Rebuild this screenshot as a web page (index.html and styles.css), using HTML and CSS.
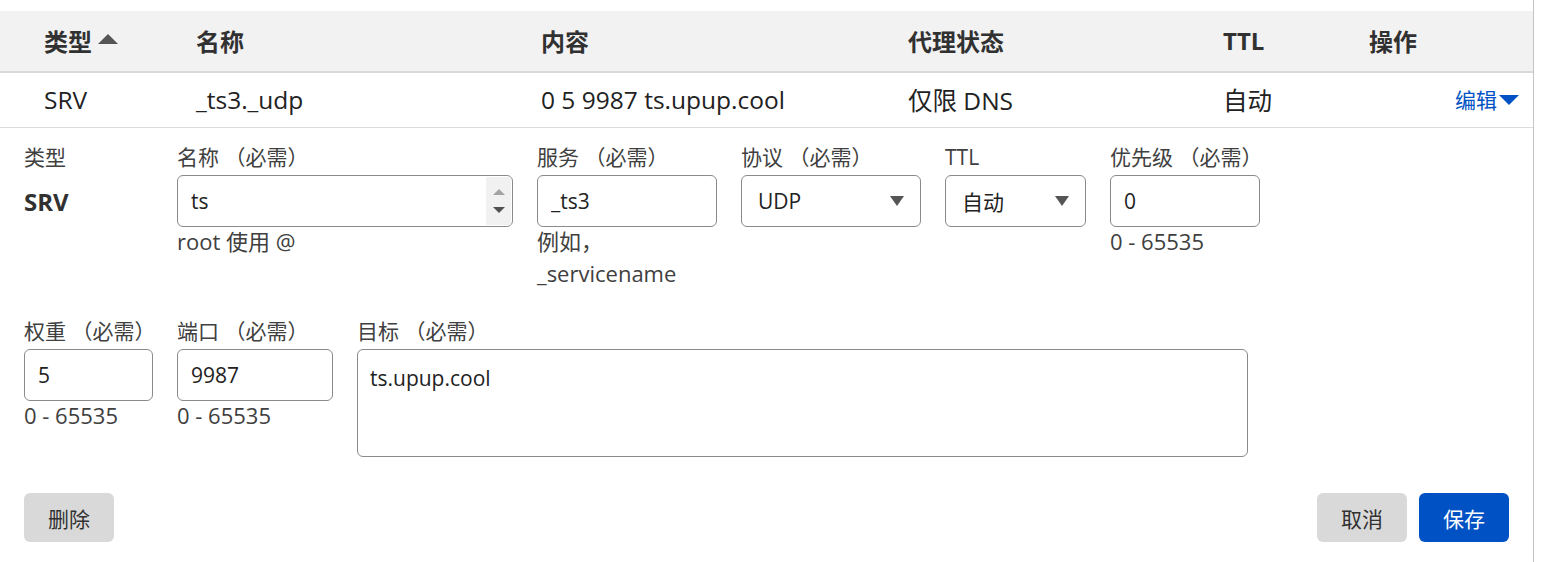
FILE: index.html
```html
<!DOCTYPE html>
<html lang="zh-CN">
<head>
<meta charset="utf-8">
<title>DNS 记录</title>
<link rel="stylesheet" href="styles.css">
</head>
<body>
<div class="panel">
  <div class="table-head cols">
    <div class="th">类型 <span class="sort-up"></span></div>
    <div class="th">名称</div>
    <div class="th">内容</div>
    <div class="th">代理状态</div>
    <div class="th">TTL</div>
    <div class="th">操作</div>
  </div>
  <div class="table-row cols">
    <div class="td">SRV</div>
    <div class="td">_ts3._udp</div>
    <div class="td">0 5 9987 ts.upup.cool</div>
    <div class="td">仅限 DNS</div>
    <div class="td">自动</div>
    <div class="td td-action"><a class="edit-link" href="#">编辑<span class="caret-down"></span></a></div>
  </div>

  <form class="editor">
    <div class="form-row">
      <div class="field w-type">
        <label class="label">类型</label>
        <div class="static-value">SRV</div>
      </div>
      <div class="field w-name">
        <label class="label">名称 （必需）</label>
        <div class="box combo">
          <input class="bare" type="text" value="ts">
          <div class="spinner"><span class="spin-up"></span><span class="spin-down"></span></div>
        </div>
        <div class="help">root 使用 @</div>
      </div>
      <div class="field w-180">
        <label class="label">服务 （必需）</label>
        <input class="box input" type="text" value="_ts3">
        <div class="help">例如，_servicename</div>
      </div>
      <div class="field w-180">
        <label class="label">协议 （必需）</label>
        <div class="box select"><span>UDP</span><span class="select-caret"></span></div>
      </div>
      <div class="field w-ttl">
        <label class="label">TTL</label>
        <div class="box select"><span>自动</span><span class="select-caret"></span></div>
      </div>
      <div class="field w-prio">
        <label class="label">优先级 （必需）</label>
        <input class="box input" type="text" value="0">
        <div class="help">0 - 65535</div>
      </div>
    </div>

    <div class="form-row row-2">
      <div class="field w-type">
        <label class="label">权重 （必需）</label>
        <input class="box input" type="text" value="5">
        <div class="help">0 - 65535</div>
      </div>
      <div class="field w-port">
        <label class="label">端口 （必需）</label>
        <input class="box input" type="text" value="9987">
        <div class="help">0 - 65535</div>
      </div>
      <div class="field w-target">
        <label class="label">目标 （必需）</label>
        <textarea class="box textarea">ts.upup.cool</textarea>
      </div>
    </div>

    <div class="actions">
      <button type="button" class="btn btn-grey">删除</button>
      <div class="actions-right">
        <button type="button" class="btn btn-grey">取消</button>
        <button type="button" class="btn btn-primary">保存</button>
      </div>
    </div>
  </form>
</div>
</body>
</html>
```

FILE: styles.css
```css
* { box-sizing: border-box; }

html, body {
  margin: 0;
  padding: 0;
  background: #ffffff;
}

body {
  font-family: "Open Sans", "Noto Sans CJK SC", "Noto Sans", sans-serif;
  color: #222222;
  overflow: hidden;
}

.panel {
  width: 1534px;
  height: 562px;
  padding-top: 11px;
  border-right: 1px solid #c4c4c4;
}

/* ---------- table ---------- */
.cols {
  display: grid;
  grid-template-columns: 152px 345px 367px 315px 146px 1fr;
  align-items: center;
  padding-left: 44px;
  padding-right: 14px;
}

.table-head {
  height: 62px;
  padding-bottom: 2px;
  background: #f2f2f2;
  border-bottom: 2px solid #d9d9d9;
}

.th {
  font-size: 24px;
  font-weight: 700;
  color: #313131;
  display: flex;
  align-items: center;
  gap: 6px;
}

.sort-up {
  width: 0;
  height: 0;
  border-left: 10px solid transparent;
  border-right: 10px solid transparent;
  border-bottom: 10px solid #555555;
  margin-top: -2px;
}

.table-row {
  height: 55px;
  padding-bottom: 2px;
  border-bottom: 1px solid #dcdcdc;
}

.td {
  font-size: 24.5px;
  color: #222222;
  white-space: nowrap;
}

.td-action {
  display: flex;
  justify-content: flex-end;
}

.edit-link {
  color: #0051c3;
  font-size: 21px;
  text-decoration: none;
  display: flex;
  align-items: center;
  gap: 2px;
}

.caret-down {
  width: 0;
  height: 0;
  border-left: 10px solid transparent;
  border-right: 10px solid transparent;
  border-top: 10px solid #0051c3;
  margin-top: 2px;
}

/* ---------- editor ---------- */
.editor {
  padding: 15px 24px 0 24px;
  margin: 0;
}

.form-row {
  display: flex;
  gap: 24px;
  align-items: flex-start;
}

.row-2 {
  margin-top: 28px;
}

.field {
  display: flex;
  flex-direction: column;
}

.w-type { width: 129px; }
.w-name { width: 336px; }
.w-180 { width: 180px; }
.w-ttl { width: 141px; }
.w-prio { width: 150px; }
.w-port { width: 156px; }
.w-target { width: 891px; }

.label {
  font-size: 21px;
  line-height: 28px;
  color: #404040;
  margin-bottom: 4px;
  white-space: nowrap;
}

.static-value {
  height: 52px;
  display: flex;
  align-items: center;
  font-size: 24px;
  font-weight: 700;
  color: #313131;
}

.box {
  height: 52px;
  border: 1px solid #8a8a8a;
  border-radius: 6px;
  background: #ffffff;
  font-family: inherit;
  font-size: 21px;
  color: #222222;
}

.input {
  width: 100%;
  padding: 0 13px;
  outline: none;
}

.combo {
  display: flex;
  overflow: hidden;
}

.bare {
  flex: 1;
  min-width: 0;
  border: 0;
  outline: none;
  background: transparent;
  font-family: inherit;
  font-size: 21px;
  color: #222222;
  padding: 0 13px;
}

.spinner {
  width: 25px;
  margin: 1px 1px 1px 0;
  background: #f1f1f1;
  display: flex;
  flex-direction: column;
  align-items: center;
  justify-content: center;
  gap: 12px;
}

.spin-up {
  width: 0;
  height: 0;
  border-left: 6px solid transparent;
  border-right: 6px solid transparent;
  border-bottom: 6px solid #a3a3a3;
}

.spin-down {
  width: 0;
  height: 0;
  border-left: 6px solid transparent;
  border-right: 6px solid transparent;
  border-top: 6px solid #505050;
}

.select {
  display: flex;
  align-items: center;
  justify-content: space-between;
  padding: 0 16px 0 16px;
}

.select-caret {
  width: 0;
  height: 0;
  border-left: 7px solid transparent;
  border-right: 7px solid transparent;
  border-top: 10px solid #555555;
}

.textarea {
  width: 100%;
  height: 108px;
  padding: 13px 12px;
  line-height: 30px;
  resize: none;
  outline: none;
}

.help {
  font-size: 22px;
  line-height: 32px;
  margin-top: -2px;
  color: #404040;
}

/* ---------- actions ---------- */
.actions {
  display: flex;
  justify-content: space-between;
  margin-top: 36px;
}

.actions-right {
  display: flex;
  gap: 12px;
}

.btn {
  width: 90px;
  height: 49px;
  border: 0;
  border-radius: 6px;
  font-family: inherit;
  font-size: 21px;
  cursor: pointer;
}

.btn-grey {
  background: #d9d9d9;
  color: #313131;
}

.btn-primary {
  background: #0051c3;
  color: #ffffff;
}
```
